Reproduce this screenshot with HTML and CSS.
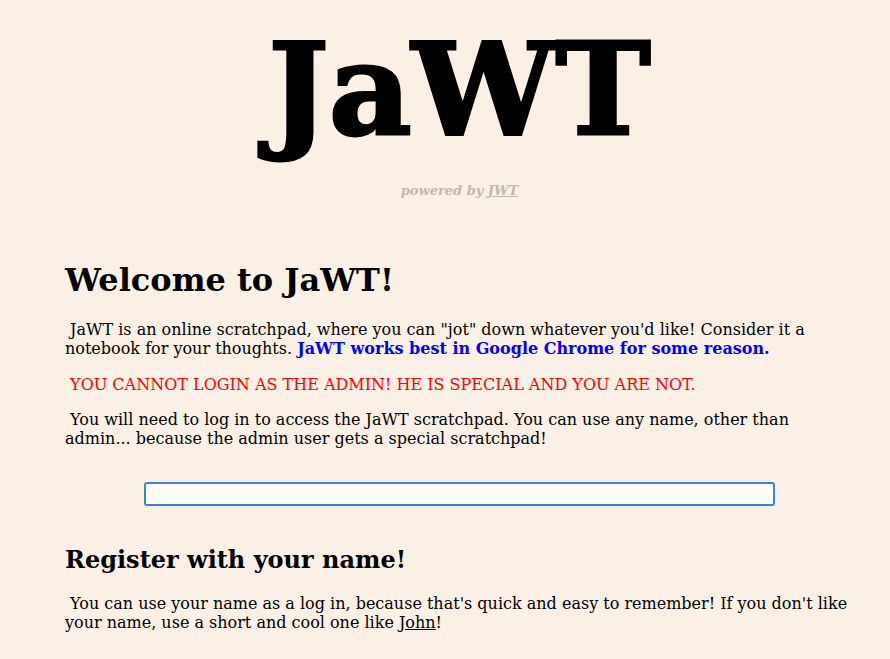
FILE: index.html
```html
<!DOCTYPE html>
<html>
<head>
<meta charset="utf-8">
<title>JaWT</title>
<link rel="stylesheet" href="styles.css">
</head>
<body>
<div class="page">
  <header class="masthead">
    <h1 class="logo">JaWT</h1>
    <p class="powered">powered by <a class="powered-link" href="#">JWT</a></p>
  </header>
  <main class="content">
    <h2 class="welcome">Welcome to JaWT!</h2>
    <p class="text first">&nbsp;JaWT is an online scratchpad, where you can "jot" down whatever you'd like! Consider it a notebook for your thoughts. <span class="blue">JaWT works best in Google Chrome for some reason.</span></p>
    <p class="text warn">&nbsp;YOU CANNOT LOGIN AS THE ADMIN! HE IS SPECIAL AND YOU ARE NOT.</p>
    <p class="text">&nbsp;You will need to log in to access the JaWT scratchpad. You can use any name, other than admin... because the admin user gets a special scratchpad!</p>
    <div class="form-row">
      <input class="name-input" type="text">
    </div>
    <h3 class="register">Register with your name!</h3>
    <p class="text">&nbsp;You can use your name as a log in, because that's quick and easy to remember! If you don't like your name, use a short and cool one like <u>John</u>!</p>
  </main>
</div>
</body>
</html>
```
FILE: styles.css
```css
html, body {
  margin: 0;
  padding: 0;
  background: #faf0e6;
}
body {
  font-family: "DejaVu Serif", serif;
  color: #000;
  font-size: 16px;
}
.page {
  padding: 0 36px 0 65px;
}
.masthead {
  text-align: center;
  padding-top: 14px;
}
.logo {
  margin: 0;
  font-size: 128px;
  font-weight: bold;
  line-height: normal;
  -webkit-text-stroke: 3px #000;
}
.powered {
  margin: 19px 0 0 0;
  font-size: 13px;
  font-weight: bold;
  font-style: italic;
  color: #c2b8ac;
}
.powered-link {
  color: #c2b8ac;
}
.welcome {
  margin: 63px 0 0 0;
  font-size: 32px;
  font-weight: bold;
}
.text {
  margin: 22px 0 0 0;
  font-size: 16px;
  line-height: 19px;
}
.first {
  margin-top: 21px;
}
.warn {
  color: #ff0000;
  margin-top: 17px;
}
.warn + .text {
  margin-top: 16px;
}
.blue {
  color: #0000ff;
  font-weight: bold;
}
.form-row {
  display: flex;
  justify-content: center;
  margin-top: 34px;
}
.name-input {
  width: 80%;
  height: 24px;
  box-sizing: border-box;
  border: 2px solid #3584e4;
  border-radius: 3px;
  background: #fff;
  padding: 0 4px;
  margin: 0;
  outline: none;
}
.register {
  margin: 39px 0 0 0;
  font-size: 24px;
  font-weight: bold;
}
.register + .text {
  margin-top: 20px;
}
```
